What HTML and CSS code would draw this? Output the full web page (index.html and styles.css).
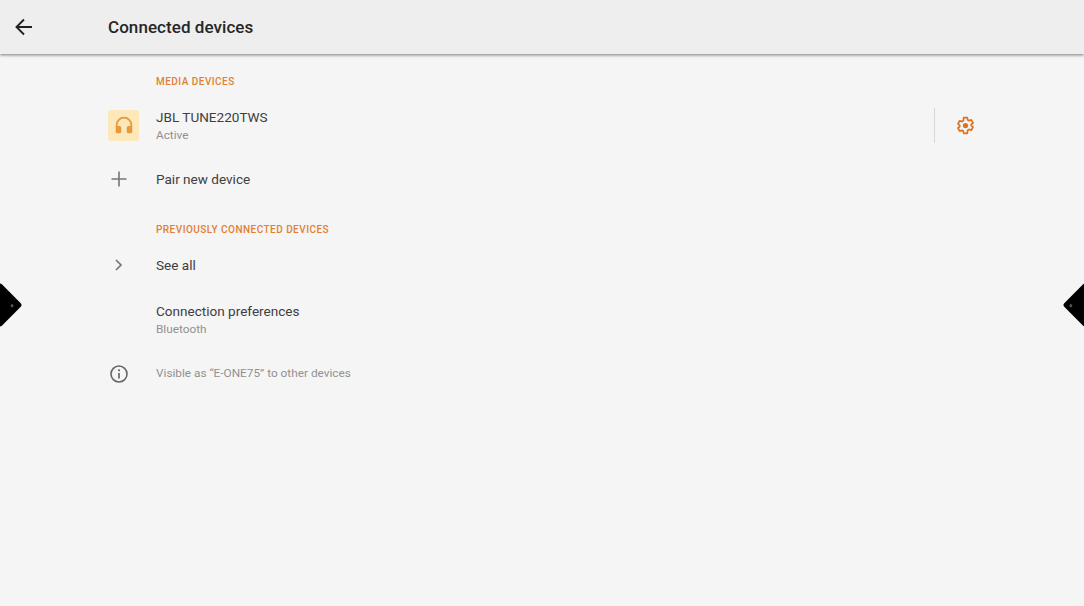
FILE: index.html
```html
<!DOCTYPE html>
<html lang="en">
<head>
  <meta charset="UTF-8">
  <title>Connected devices</title>
  <link rel="stylesheet" href="styles.css">
</head>
<body>

  <header class="topbar">
    <svg class="back" viewBox="0 0 24 24" width="24" height="24"><path d="M20 12H4.500M12 4.500L4.500 12l7.500 7.500" fill="none" stroke="#212121" stroke-width="1.900"/></svg>
    <h1 class="title">Connected devices</h1>
  </header>

  <main class="list">
    <div class="label label-first">MEDIA DEVICES</div>

    <div class="row row-device">
      <span class="icon-box">
        <svg viewBox="0 0 24 24" width="24" height="24"><path fill="#e8973a" d="M12 3a9 9 0 0 0-9 9v7a2 2 0 0 0 2 2h2a2 2 0 0 0 2-2v-4a2 2 0 0 0-2-2H5v-1a7 7 0 0 1 14 0v1h-2a2 2 0 0 0-2 2v4a2 2 0 0 0 2 2h2a2 2 0 0 0 2-2v-7a9 9 0 0 0-9-9z"/></svg>
      </span>
      <div class="text">
        <div class="name">JBL TUNE220TWS</div>
        <div class="sub">Active</div>
      </div>
      <div class="action">
        <svg viewBox="0 0 24 24" width="24" height="24"><path fill="none" stroke="#e2711d" stroke-width="2" stroke-linejoin="round" d="M10 3h4l.5 2.600 1.600.9 2.500-.9 2 3.500-2 1.700v1.400l2 1.700-2 3.500-2.500-.9-1.600.9L14 21h-4l-.5-2.600-1.600-.9-2.500.9-2-3.500 2-1.700v-1.400l-2-1.700 2-3.500 2.500.9 1.600-.9z"/><circle cx="12" cy="12" r="3" fill="#e2711d"/></svg>
      </div>
    </div>

    <div class="row row-pair">
      <span class="icon">
        <svg viewBox="0 0 24 24" width="24" height="24"><path d="M12 4.500v15M4.500 12h15" fill="none" stroke="#757575" stroke-width="1.600"/></svg>
      </span>
      <div class="name">Pair new device</div>
    </div>

    <div class="label">PREVIOUSLY CONNECTED DEVICES</div>

    <div class="row row-see">
      <span class="icon">
        <svg viewBox="0 0 24 24" width="24" height="24"><path d="M9 7l5 5-5 5" fill="none" stroke="#757575" stroke-width="1.700"/></svg>
      </span>
      <div class="name">See all</div>
    </div>

    <div class="row row-prefs">
      <span class="icon"></span>
      <div class="text">
        <div class="name">Connection preferences</div>
        <div class="sub">Bluetooth</div>
      </div>
    </div>

    <div class="row row-info">
      <span class="icon">
        <svg viewBox="0 0 24 24" width="24" height="24"><circle cx="12" cy="12" r="8" fill="none" stroke="#666" stroke-width="1.600"/><path d="M12 11v5.500" stroke="#666" stroke-width="1.700"/><circle cx="12" cy="8.300" r="1.100" fill="#666"/></svg>
      </span>
      <div class="sub info-text">Visible as “E-ONE75” to other devices</div>
    </div>
  </main>

  <!-- floating side handles -->
  <div class="handle handle-left"><span class="dot"></span></div>
  <div class="handle handle-right"><span class="dot"></span></div>

</body>
</html>
```

FILE: styles.css
```css
body {
  margin: 0;
  height: 606px;
  overflow: hidden;
  background: #f5f5f5;
  font-family: Roboto, sans-serif;
  position: relative;
}

.topbar {
  height: 54px;
  box-sizing: border-box;
  display: flex;
  align-items: center;
  padding-left: 12px;
  background: #eeeeee;
  box-shadow: 0 1px 3px rgba(0,0,0,0.5);
}
.back {
  margin-right: 72px;
}
.title {
  margin: 0;
  font-size: 17px;
  font-weight: 500;
  letter-spacing: 0.06px;
  color: #262626;
}

.list {
  padding: 15px 108px 0 108px;
}
.label {
  height: 26px;
  line-height: 26px;
  margin: 11px 0 0 48px;
  font-size: 10px;
  font-weight: 500;
  letter-spacing: 0.47px;
  color: #e27f33;
}
.label-first {
  margin-top: 0;
  margin-bottom: 3px;
}

.row {
  display: flex;
  align-items: center;
}
.row-device { height: 54px; }
.row-pair { height: 54px; }
.row-see { height: 44px; }
.row-prefs { height: 66px; }
.row-info { height: 42px; }

.icon-box {
  width: 31px;
  height: 31px;
  margin-right: 17px;
  display: flex;
  align-items: center;
  justify-content: center;
  background: #fce8b8;
  border-radius: 3px;
}
.icon-box svg {
  width: 22px;
  height: 22px;
}
.icon {
  width: 24px;
  height: 24px;
  margin-left: -1px;
  margin-right: 25px;
}

.text {
  flex: 1;
}
.row-device .text {
  padding-top: 2px;
}
.name {
  font-size: 13.55px;
  line-height: 18px;
  color: #404040;
}
.sub {
  font-size: 11.8px;
  line-height: 18px;
  color: #919191;
}
.info-text {
  margin-top: -2px;
}

.action {
  height: 35px;
  width: 41px;
  display: flex;
  align-items: center;
  justify-content: flex-end;
  border-left: 1px solid #d8d8d8;
}
.action svg {
  width: 21px;
  height: 21px;
}

.handle {
  position: absolute;
  top: 289px;
  width: 32px;
  height: 32px;
  background: #000;
  border-radius: 3px;
  transform: rotate(45deg);
}
.handle-left { left: -16px; }
.handle-right { right: -17px; }
.dot {
  position: absolute;
  left: 15px;
  top: 15px;
  width: 3px;
  height: 3px;
  background: #555;
  border-radius: 50%;
}
.handle-left .dot { transform: translate(8.500px, -8.500px); }
.handle-right .dot { transform: translate(-10px, 10px); }
```
